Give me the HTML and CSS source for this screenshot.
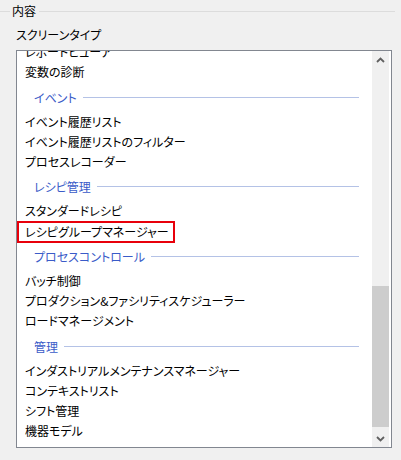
FILE: index.html
```html
<!DOCTYPE html>
<html lang="ja">
<head>
<meta charset="utf-8">
<link rel="stylesheet" href="styles.css">
</head>
<body>
<div class="group">
  <div class="legend-row">
    <span class="legend-pre"></span>
    <span class="legend">内容</span>
    <span class="legend-line"></span>
  </div>
  <div class="label">スクリーンタイプ</div>
  <div class="listbox">
    <div class="list-area">
      <div class="list-content">
        <div class="item">レポートビューア</div>
        <div class="item">変数の診断</div>
        <div class="cat"><span>イベント</span><i></i></div>
        <div class="item">イベント履歴リスト</div>
        <div class="item">イベント履歴リストのフィルター</div>
        <div class="item">プロセスレコーダー</div>
        <div class="cat"><span>レシピ管理</span><i></i></div>
        <div class="item">スタンダードレシピ</div>
        <div class="item"><span class="mark">レシピグループマネージャー</span></div>
        <div class="cat"><span>プロセスコントロール</span><i></i></div>
        <div class="item">バッチ制御</div>
        <div class="item">プロダクション&amp;ファシリティスケジューラー</div>
        <div class="item">ロードマネージメント</div>
        <div class="cat"><span>管理</span><i></i></div>
        <div class="item">インダストリアルメンテナンスマネージャー</div>
        <div class="item">コンテキストリスト</div>
        <div class="item">シフト管理</div>
        <div class="item">機器モデル</div>
      </div>
    </div>
    <div class="scrollbar">
      <div class="sb-btn">
        <svg width="9" height="6" viewBox="0 0 9 6"><path d="M1 5 L4.5 1.5 L8 5" fill="none" stroke="#606060" stroke-width="1.8"/></svg>
      </div>
      <div class="sb-track"><div class="sb-thumb"></div></div>
      <div class="sb-btn">
        <svg width="9" height="6" viewBox="0 0 9 6"><path d="M1 1 L4.5 4.5 L8 1" fill="none" stroke="#606060" stroke-width="1.8"/></svg>
      </div>
    </div>
  </div>
</div>
</body>
</html>
```

FILE: styles.css
```css
html, body {
  margin: 0;
  padding: 0;
  background: #f0f0f0;
}
body {
  font-family: "Noto Sans CJK JP", "Noto Sans", sans-serif;
  font-size: 12px;
  font-feature-settings: "palt" 1;
  color: #000;
  width: 401px;
  height: 460px;
  overflow: hidden;
}
.group {
  padding-top: 2px;
}
.legend-row {
  display: flex;
  align-items: center;
  height: 18px;
  padding-right: 6px;
}
.legend-pre {
  width: 10px;
  border-top: 1px solid #dcdcdc;
}
.legend {
  padding: 0 3px 0 2px;
  line-height: 18px;
}
.legend-line {
  flex: 1;
  border-top: 1px solid #dcdcdc;
}
.label {
  margin: 6px 0 0 16px;
  line-height: 18px;
  height: 24px;
}
.listbox {
  margin-left: 16px;
  width: 372px;
  height: 396px;
  border: 1px solid #828790;
  background: #fff;
  display: flex;
  padding-right: 2px;
}
.list-area {
  flex: 1;
  overflow: hidden;
}
.list-content {
  margin-top: -9px;
}
.item {
  height: 20.25px;
  line-height: 20.25px;
  padding-left: 8px;
  white-space: nowrap;
}
.mark {
  display: inline-block;
  margin-left: -8px;
  padding: 0 4px 0 6px;
  height: 18px;
  line-height: 18px;
  border: 2px solid #e8000b;
  margin-top: -1px;
  vertical-align: top;
}
.cat {
  height: 29px;
  display: flex;
  align-items: center;
  padding-left: 17px;
  padding-right: 13px;
  color: #3a5bc8;
}
.cat span {
  padding-right: 6px;
  white-space: nowrap;
}
.cat i {
  flex: 1;
  border-top: 1px solid #b4c2e6;
}
.scrollbar {
  width: 17px;
  background: #f0f0f0;
  display: flex;
  flex-direction: column;
}
.sb-btn {
  height: 17px;
  display: flex;
  align-items: center;
  justify-content: center;
}
.sb-track {
  flex: 1;
}
.sb-thumb {
  margin-top: 218px;
  height: 141px;
  background: #cdcdcd;
}
```
